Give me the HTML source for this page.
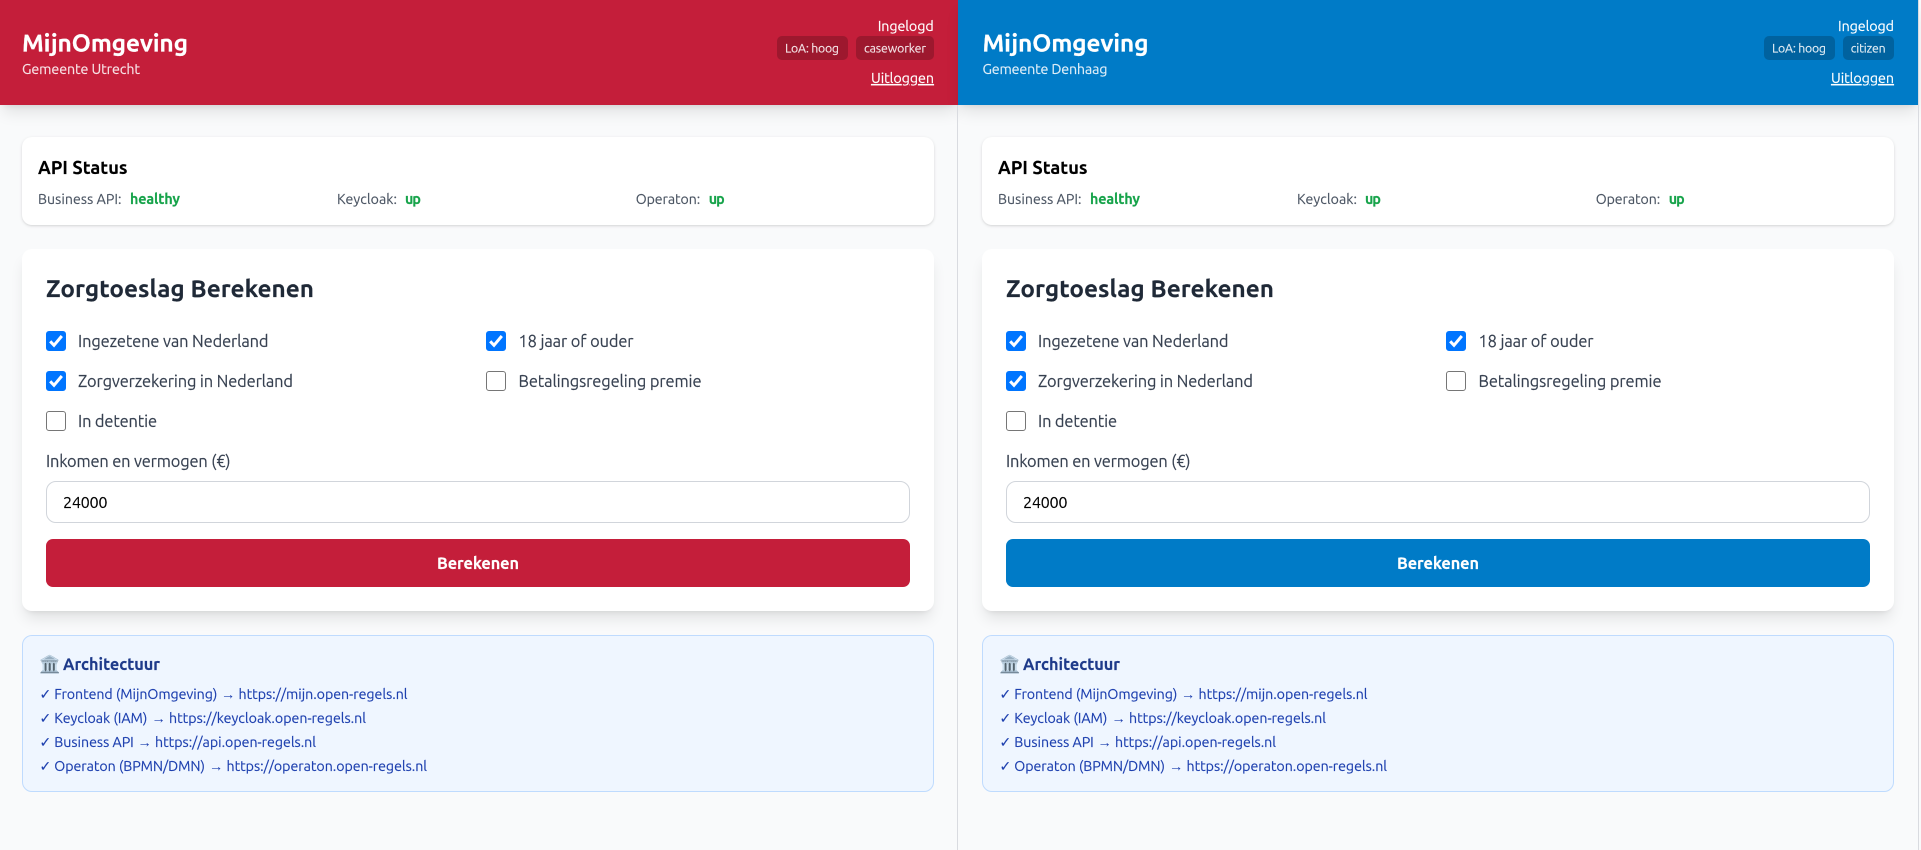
<!DOCTYPE html>
<html lang="nl">
<head>
<meta charset="utf-8">
<title>MijnOmgeving</title>
<style>
html,body{margin:0;padding:0;width:1921px;height:850px;overflow:hidden;background:#f9fafb}
.b{position:absolute;box-sizing:border-box}
.hdr{top:0;height:105px;box-shadow:0 10px 15px -3px rgba(0,0,0,.1),0 4px 6px -4px rgba(0,0,0,.1)}
.red{background:#c41e3a}.blue{background:#007bc7}
.vl{top:0;height:850px;width:1px;background:#d9dbe0}
.api{top:137px;height:88px;width:912px;background:#fff;border-radius:10px;box-shadow:0 1px 3px rgba(0,0,0,.12),0 1px 2px -1px rgba(0,0,0,.1)}
.form{top:249px;height:362px;width:912px;background:#fff;border-radius:10px;box-shadow:0 10px 15px -3px rgba(0,0,0,.1),0 4px 6px -4px rgba(0,0,0,.1)}
.arch{top:635px;height:157px;width:912px;background:#eff6ff;border:1px solid #bfdbfe;border-radius:10px}
.inp{top:481px;height:42px;width:864px;background:#fff;border:1px solid #d1d5db;border-radius:10px}
.btn{top:539px;height:48px;width:864px;border-radius:7px}
.badge{top:36px;height:24px;border-radius:5px}
.bred{background:#9d182e}.bblue{background:#00629f}
.cb{width:20px;height:20px;border-radius:3px;background:#fff;border:1px solid #767676}
.cb.on{background:#0075ff;border-color:#0075ff}
.cb svg{position:absolute;left:-1px;top:-1px}
svg.t{position:absolute;left:0;top:0;filter:blur(.25px)}
text{font-family:"Ubuntu","Liberation Sans","DejaVu Sans",sans-serif;white-space:pre;fill:currentColor;stroke:currentColor;stroke-width:.16px}
.h1{font-size:24.5px;font-weight:700;color:#fff}
.sub{font-size:14.3px;color:rgba(255,255,255,.85)}
.in{font-size:14.3px;color:#fff}
.bd{font-size:12.3px;color:rgba(255,255,255,.85)}
.ul{font-size:14.3px;color:#fff;text-decoration:underline}
.h3{font-size:18.2px;font-weight:700;color:#000}
.k{font-size:14.1px;color:#4b5563}
.v{font-size:14.3px;font-weight:700;color:#16a34a}
.h2{font-size:24.3px;font-weight:700;color:#1f2937}
.l{font-size:16.4px;color:#374151}
.val{font-size:16.3px;color:#000}
.go{font-size:16.3px;font-weight:700;color:#fff}
.at{font-size:16.3px;font-weight:700;color:#1e3a8a}
.li{font-size:14.2px;color:#1e40af}
.ar{font-size:14.2px;color:#1e40af;stroke:none}
.ck{font-size:14px;color:#1e40af;font-family:"DejaVu Sans",sans-serif}
.em{font-size:17.17px;stroke:none}
</style>
</head>
<body>

<div class="b hdr red" style="left:0;width:958px"></div>
<div class="b hdr blue" style="left:958px;width:960.5px"></div>
<div class="b vl" style="left:957px;top:105px;height:745px"></div>
<div class="b vl" style="left:1918px"></div>

<div class="b badge bred" style="left:777px;width:71px"></div>
<div class="b badge bred" style="left:856px;width:78px"></div>
<div class="b badge bblue" style="left:1764px;width:71px"></div>
<div class="b badge bblue" style="left:1843px;width:51px"></div>

<div class="b api" style="left:22px"></div>
<div class="b api" style="left:982px"></div>
<div class="b form" style="left:22px"></div>
<div class="b form" style="left:982px"></div>

<div class="b cb on" style="left:46px;top:331px"><svg width="20" height="20" viewBox="0 0 20 20"><path d="M4.200 10.300l3.800 4L15.800 5" fill="none" stroke="#fff" stroke-width="3"/></svg></div>
<div class="b cb on" style="left:486px;top:331px"><svg width="20" height="20" viewBox="0 0 20 20"><path d="M4.200 10.300l3.800 4L15.800 5" fill="none" stroke="#fff" stroke-width="3"/></svg></div>
<div class="b cb on" style="left:46px;top:371px"><svg width="20" height="20" viewBox="0 0 20 20"><path d="M4.200 10.300l3.800 4L15.800 5" fill="none" stroke="#fff" stroke-width="3"/></svg></div>
<div class="b cb" style="left:486px;top:371px"></div>
<div class="b cb" style="left:46px;top:411px"></div>

<div class="b cb on" style="left:1006px;top:331px"><svg width="20" height="20" viewBox="0 0 20 20"><path d="M4.200 10.300l3.800 4L15.800 5" fill="none" stroke="#fff" stroke-width="3"/></svg></div>
<div class="b cb on" style="left:1446px;top:331px"><svg width="20" height="20" viewBox="0 0 20 20"><path d="M4.200 10.300l3.800 4L15.800 5" fill="none" stroke="#fff" stroke-width="3"/></svg></div>
<div class="b cb on" style="left:1006px;top:371px"><svg width="20" height="20" viewBox="0 0 20 20"><path d="M4.200 10.300l3.800 4L15.800 5" fill="none" stroke="#fff" stroke-width="3"/></svg></div>
<div class="b cb" style="left:1446px;top:371px"></div>
<div class="b cb" style="left:1006px;top:411px"></div>

<div class="b inp" style="left:46px"></div>
<div class="b inp" style="left:1006px"></div>
<div class="b btn red" style="left:46px"></div>
<div class="b btn blue" style="left:1006px"></div>
<div class="b arch" style="left:22px"></div>
<div class="b arch" style="left:982px"></div>

<svg class="t" width="1921" height="850" viewBox="0 0 1921 850">

<!-- Left panel -->
<text class="h1" x="22" y="51.500" textLength="166">MijnOmgeving</text>
<text class="sub" x="22" y="74" textLength="118">Gemeente Utrecht</text>
<text class="in" x="877.700" y="31" textLength="56">Ingelogd</text>
<text class="bd" x="785" y="52.500" textLength="54">LoA: hoog</text>
<text class="bd" x="864" y="52.500" textLength="62">caseworker</text>
<text class="ul" x="871" y="83" textLength="63">Uitloggen</text>
<text class="h3" x="38" y="174" textLength="89.500">API Status</text>
<text class="k" x="38" y="204" textLength="83.500">Business API:</text>
<text class="v" x="130" y="204" textLength="50">healthy</text>
<text class="k" x="337" y="204" textLength="60">Keycloak:</text>
<text class="v" x="405" y="204" textLength="16">up</text>
<text class="k" x="635.700" y="204" textLength="64.500">Operaton:</text>
<text class="v" x="708.700" y="204" textLength="16">up</text>
<text class="h2" x="46" y="297" textLength="268">Zorgtoeslag Berekenen</text>
<text class="l" x="78" y="347" textLength="190.500">Ingezetene van Nederland</text>
<text class="l" x="518.500" y="347" textLength="115">18 jaar of ouder</text>
<text class="l" x="78" y="387" textLength="215">Zorgverzekering in Nederland</text>
<text class="l" x="518.500" y="387" textLength="183">Betalingsregeling premie</text>
<text class="l" x="78" y="427" textLength="79">In detentie</text>
<text class="l" x="46" y="467" textLength="184.500">Inkomen en vermogen (€)</text>
<text class="val" x="63" y="508" textLength="44.500">24000</text>
<text class="go" x="437" y="569" textLength="82">Berekenen</text>
<text class="em" x="39" y="670">🏛️</text>
<text class="at" x="63" y="670" textLength="97">Architectuur</text>
<text class="ck" x="39.500" y="699">✓</text><text class="li" x="54.300" y="699" textLength="163">Frontend (MijnOmgeving)</text><text class="ar" x="221" y="699">→</text><text class="li" x="238.500" y="699" textLength="169">https://mijn.open-regels.nl</text>
<text class="ck" x="39.500" y="723">✓</text><text class="li" x="54.300" y="723" textLength="93">Keycloak (IAM)</text><text class="ar" x="151.500" y="723">→</text><text class="li" x="169" y="723" textLength="197">https://keycloak.open-regels.nl</text>
<text class="ck" x="39.500" y="747">✓</text><text class="li" x="54.300" y="747" textLength="79.500">Business API</text><text class="ar" x="137.500" y="747">→</text><text class="li" x="155" y="747" textLength="161">https://api.open-regels.nl</text>
<text class="ck" x="39.500" y="771">✓</text><text class="li" x="54.300" y="771" textLength="150.700">Operaton (BPMN/DMN)</text><text class="ar" x="209" y="771">→</text><text class="li" x="226.500" y="771" textLength="200.500">https://operaton.open-regels.nl</text>

<!-- Right panel -->
<text class="h1" x="982.500" y="51.500" textLength="166">MijnOmgeving</text>
<text class="sub" x="982.500" y="74" textLength="125">Gemeente Denhaag</text>
<text class="in" x="1838" y="31" textLength="56">Ingelogd</text>
<text class="bd" x="1772" y="52.500" textLength="54">LoA: hoog</text>
<text class="bd" x="1850.700" y="52.500" textLength="35">citizen</text>
<text class="ul" x="1831" y="83" textLength="63">Uitloggen</text>
<text class="h3" x="998" y="174" textLength="89.500">API Status</text>
<text class="k" x="998" y="204" textLength="83.500">Business API:</text>
<text class="v" x="1090" y="204" textLength="50">healthy</text>
<text class="k" x="1297" y="204" textLength="60">Keycloak:</text>
<text class="v" x="1365" y="204" textLength="16">up</text>
<text class="k" x="1595.700" y="204" textLength="64.500">Operaton:</text>
<text class="v" x="1668.700" y="204" textLength="16">up</text>
<text class="h2" x="1006" y="297" textLength="268">Zorgtoeslag Berekenen</text>
<text class="l" x="1038" y="347" textLength="190.500">Ingezetene van Nederland</text>
<text class="l" x="1478.500" y="347" textLength="115">18 jaar of ouder</text>
<text class="l" x="1038" y="387" textLength="215">Zorgverzekering in Nederland</text>
<text class="l" x="1478.500" y="387" textLength="183">Betalingsregeling premie</text>
<text class="l" x="1038" y="427" textLength="79">In detentie</text>
<text class="l" x="1006" y="467" textLength="184.500">Inkomen en vermogen (€)</text>
<text class="val" x="1023" y="508" textLength="44.500">24000</text>
<text class="go" x="1397" y="569" textLength="82">Berekenen</text>
<text class="em" x="999" y="670">🏛️</text>
<text class="at" x="1023" y="670" textLength="97">Architectuur</text>
<text class="ck" x="999.500" y="699">✓</text><text class="li" x="1014.300" y="699" textLength="163">Frontend (MijnOmgeving)</text><text class="ar" x="1181" y="699">→</text><text class="li" x="1198.500" y="699" textLength="169">https://mijn.open-regels.nl</text>
<text class="ck" x="999.500" y="723">✓</text><text class="li" x="1014.300" y="723" textLength="93">Keycloak (IAM)</text><text class="ar" x="1111.500" y="723">→</text><text class="li" x="1129" y="723" textLength="197">https://keycloak.open-regels.nl</text>
<text class="ck" x="999.500" y="747">✓</text><text class="li" x="1014.300" y="747" textLength="79.500">Business API</text><text class="ar" x="1097.500" y="747">→</text><text class="li" x="1115" y="747" textLength="161">https://api.open-regels.nl</text>
<text class="ck" x="999.500" y="771">✓</text><text class="li" x="1014.300" y="771" textLength="150.700">Operaton (BPMN/DMN)</text><text class="ar" x="1169" y="771">→</text><text class="li" x="1186.500" y="771" textLength="200.500">https://operaton.open-regels.nl</text>
</svg>
</body>
</html>
